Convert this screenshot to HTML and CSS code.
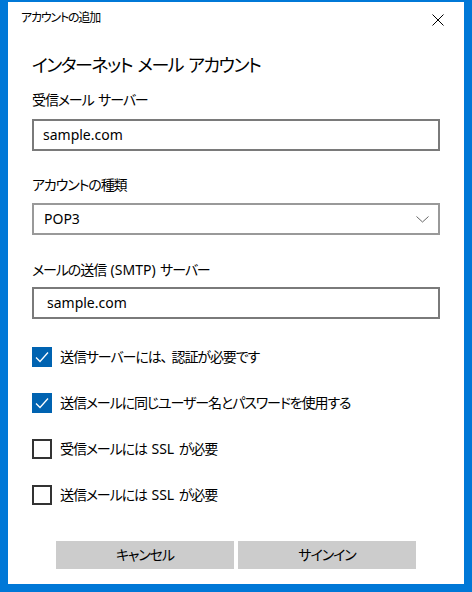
FILE: index.html
```html
<!DOCTYPE html>
<html lang="ja">
<head>
<meta charset="utf-8">
<link rel="stylesheet" href="styles.css">
</head>
<body>
<div class="frame">
  <div class="dialog">
    <div class="titlebar">
      <span class="title">アカウントの追加</span>
      <svg class="close" width="12" height="12" viewBox="0 0 12 12"><path d="M0.5 0.5 L11.5 11.5 M11.5 0.5 L0.5 11.5" stroke="#000" stroke-width="1" fill="none"/></svg>
    </div>
    <div class="content">
      <h1 class="heading">インターネット メール アカウント</h1>
      <div class="label l1">受信メール サーバー</div>
      <div class="field input">sample.com</div>
      <div class="label l2">アカウントの種類</div>
      <div class="field select">
        <span>POP3</span>
        <svg class="chev" width="13" height="7" viewBox="0 0 13 7"><path d="M0.5 0.5 L6.5 6 L12.5 0.5" stroke="#666" stroke-width="1" fill="none"/></svg>
      </div>
      <div class="label l3">メールの送信 <span class="lat">(SMTP)</span> サーバー</div>
      <div class="field input wide">sample.com</div>
      <div class="checks">
        <div class="check"><span class="box on"><svg width="20" height="20" viewBox="0 0 20 20"><path d="M4 10.5 L8 14.5 L16 5.5" stroke="#fff" stroke-width="1.3" fill="none"/></svg></span><span>送信サーバーには<span class="full">、</span>認証が必要です</span></div>
        <div class="check"><span class="box on"><svg width="20" height="20" viewBox="0 0 20 20"><path d="M4 10.5 L8 14.5 L16 5.5" stroke="#fff" stroke-width="1.3" fill="none"/></svg></span><span>送信メールに同じユーザー名とパスワードを使用する</span></div>
        <div class="check"><span class="box"></span><span>受信メールには <span class="lat">SSL</span> が必要</span></div>
        <div class="check"><span class="box"></span><span>送信メールには <span class="lat">SSL</span> が必要</span></div>
      </div>
      <div class="buttons">
        <div class="btn">キャンセル</div>
        <div class="btn">サインイン</div>
      </div>
    </div>
  </div>
</div>
</body>
</html>
```
FILE: styles.css
```css
html, body {
  margin: 0;
  padding: 0;
}
body {
  background: #0078d7;
  font-family: "Noto Sans", "Noto Sans CJK JP", sans-serif;
  font-feature-settings: "palt";
  color: #000;
  letter-spacing: -1.1px;
  word-spacing: 2px;
}
.lat {
  letter-spacing: 0;
}
.full {
  font-feature-settings: normal;
  letter-spacing: -3px;
}
.frame {
  width: 472px;
  height: 592px;
  box-sizing: border-box;
  padding: 2px 8px 8px 8px;
}
.dialog {
  background: #fff;
  height: 582px;
}
.titlebar {
  height: 32px;
  display: flex;
  align-items: center;
  justify-content: space-between;
  padding: 0 20px 0 13px;
}
.title {
  font-size: 12px;
  line-height: 32px;
  letter-spacing: -1.2px;
}
.close {
  margin-top: 4px;
}
.content {
  padding: 0 24px;
}
.heading {
  margin: 17px 0 0 0;
  font-size: 18px;
  font-weight: normal;
  line-height: 28px;
  letter-spacing: -1.5px;
  word-spacing: 2px;
}
.label {
  font-size: 14px;
  line-height: 20px;
}
.l1 { margin-top: 11px; }
.l2 { margin-top: 24px; }
.l3 { margin-top: 25px; }
.field {
  box-sizing: border-box;
  height: 32px;
  border: 2px solid #7a7a7a;
  font-size: 14px;
  line-height: 28px;
  padding: 0 9px;
  letter-spacing: 0;
  word-spacing: 0;
}
.input { margin-top: 9px; }
.select {
  margin-top: 8px;
  border-color: #999;
  display: flex;
  align-items: center;
  justify-content: space-between;
  padding: 0 9px 0 10px;
}
.field.wide {
  margin-top: 7px;
  padding-left: 13px;
}
.checks {
  margin-top: 28px;
  display: flex;
  flex-direction: column;
  gap: 26px;
}
.check {
  display: flex;
  align-items: center;
  gap: 8px;
  height: 20px;
  font-size: 14px;
  line-height: 20px;
}
.box {
  width: 20px;
  height: 20px;
  box-sizing: border-box;
  border: 2px solid #333;
  flex: none;
  position: relative;
}
.box.on {
  background: #0063b1;
  border-color: #0063b1;
}
.box svg {
  position: absolute;
  left: -2px;
  top: -2px;
}
.buttons {
  margin-top: 36px;
  display: flex;
  justify-content: center;
  gap: 4px;
}
.btn {
  width: 178px;
  height: 28px;
  background: #cccccc;
  font-size: 14px;
  line-height: 28px;
  text-align: center;
}
```
